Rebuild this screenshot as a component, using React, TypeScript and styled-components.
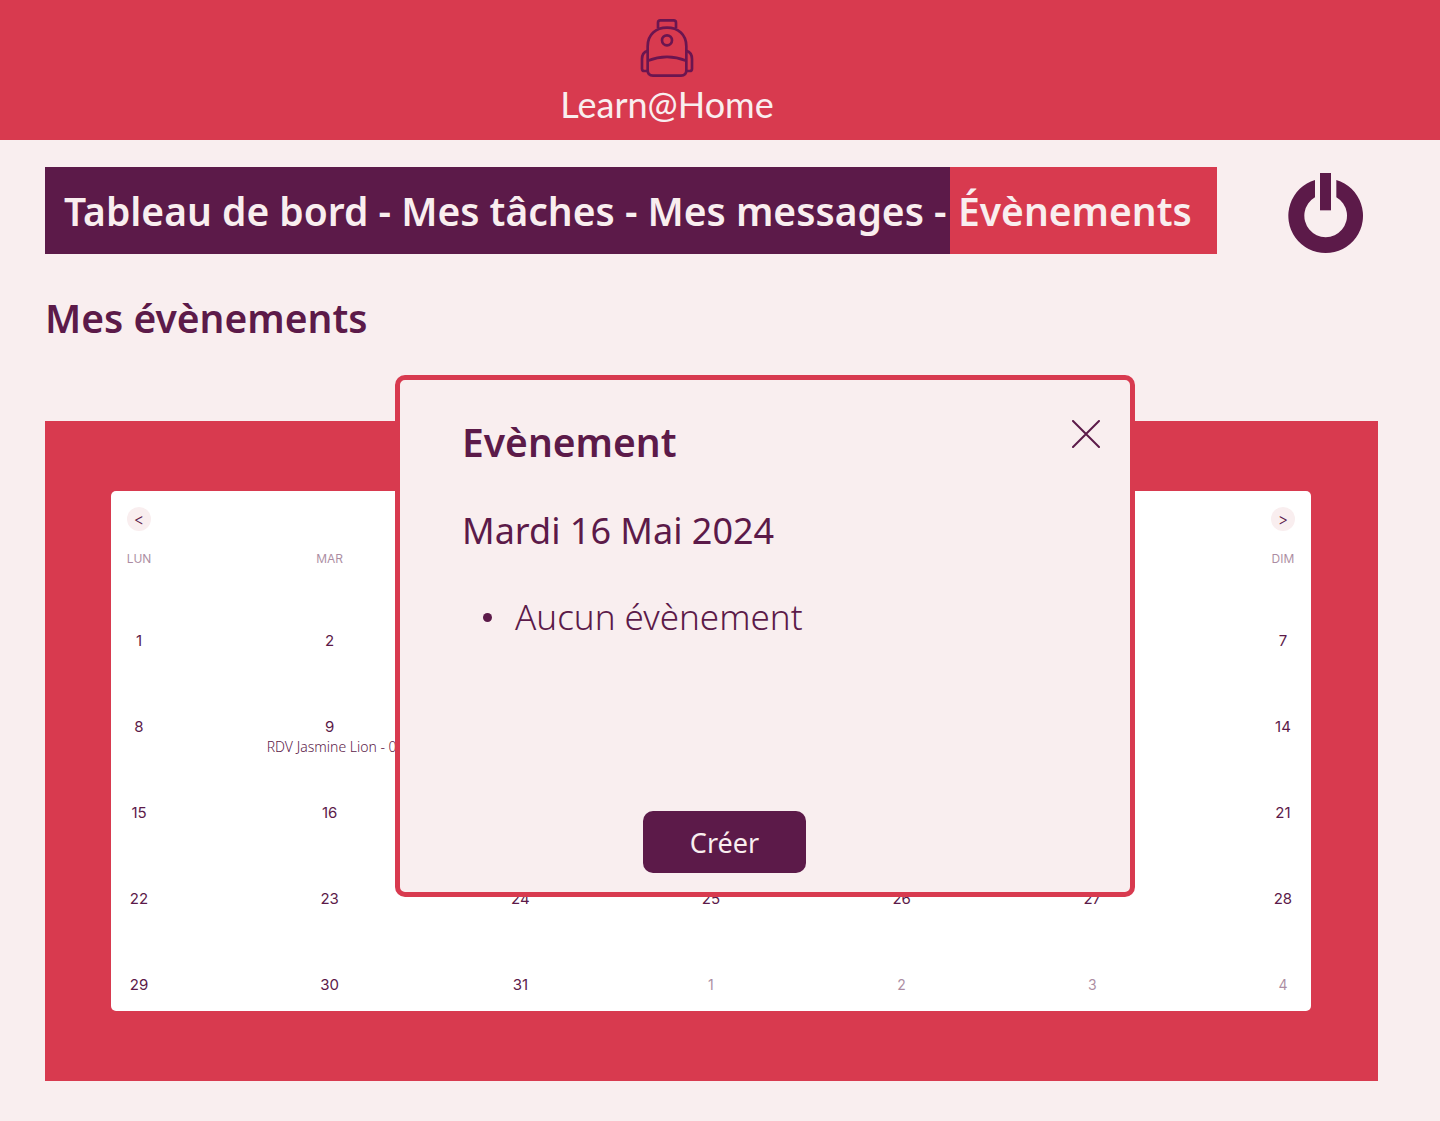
import React from "react";
import styled, { createGlobalStyle, css } from "styled-components";

const red = "#d83a4f";
const plum = "#5c1a49";
const blush = "#f9eeef";

const GlobalStyle = createGlobalStyle`
  *, *::before, *::after { box-sizing: border-box; }
  body {
    margin: 0;
    background: ${blush};
    color: ${plum};
    font-family: "Noto Sans", "Open Sans", sans-serif;
  }
  h1, h2, p, ul { margin: 0; padding: 0; }
  button { border: 0; padding: 0; font: inherit; color: inherit; background: none; cursor: pointer; }
`;

const Header = styled.header`
  display: flex;
  flex-direction: column;
  align-items: center;
  height: 140px;
  padding: 19px 106px 0 0;
  background: ${red};
`;

const Brand = styled.a`
  display: flex;
  flex-direction: column;
  align-items: center;
  gap: 2px;
  color: ${blush};
  font-family: Lato, sans-serif;
  font-size: 36px;
  line-height: 48px;
  text-decoration: none;
`;

const TopRow = styled.div`
  display: flex;
  align-items: flex-end;
  gap: 71px;
  padding: 27px 77px 0 45px;
`;

const Nav = styled.nav`
  display: flex;
  flex: 1;
  min-width: 0;
  height: 87px;
  font-size: 39px;
  font-weight: 600;
  line-height: 87px;
  white-space: nowrap;
  color: ${blush};
`;

const NavLinks = styled.div`
  flex: 1;
  padding-left: 19px;
  background: ${plum};
`;

const NavLink = styled.a<{ $active?: boolean }>`
  color: inherit;
  text-decoration: none;
  ${(p) =>
    p.$active &&
    css`
      flex: 0 0 267px;
      padding-left: 8px;
      background: ${red};
    `}
`;

const LogoutButton = styled.button`
  display: flex;
`;

const Main = styled.main`
  padding: 40px 62px 40px 45px;
`;

const PageTitle = styled.h1`
  margin-bottom: 79px;
  font-size: 39px;
  font-weight: 600;
  line-height: 48px;
`;

const Panel = styled.section`
  position: relative;
  padding: 70px 67px 70px 66px;
  background: ${red};
`;

const Card = styled.div`
  padding: 16px;
  border-radius: 5px;
  background: #fff;
  font-family: Inter, sans-serif;
`;

const MonthBar = styled.div`
  display: flex;
  justify-content: space-between;
  margin-bottom: 20px;
`;

const RoundButton = styled.button`
  width: 24px;
  height: 24px;
  border-radius: 50%;
  background: ${blush};
  font-size: 16px;
  font-weight: 300;
  line-height: 24px;
`;

const Calendar = styled.table`
  display: flex;
  flex-direction: column;
  gap: 64px;
`;

const Week = styled.tr`
  display: flex;
  justify-content: space-between;
`;

const Weeks = styled.tbody`
  display: grid;
  grid-auto-rows: 20px;
  row-gap: 66px;
`;

const WeekDay = styled.th<{ $covered: boolean }>`
  display: flex;
  justify-content: center;
  width: 24px;
  padding: 0;
  font-size: 12px;
  font-weight: 400;
  line-height: 16px;
  opacity: 0.5;
  visibility: ${(p) => (p.$covered ? "hidden" : "visible")};
`;

const Day = styled.td<{ $muted: boolean; $covered: boolean }>`
  display: flex;
  flex-direction: column;
  align-items: center;
  width: 24px;
  padding: 0;
  font-size: ${(p) => (p.$muted ? 14 : 15)}px;
  line-height: 20px;
  opacity: ${(p) => (p.$muted ? 0.5 : 1)};
  visibility: ${(p) => (p.$covered ? "hidden" : "visible")};
`;

const EventLabel = styled.span`
  width: 126px;
  font-family: "Noto Sans", sans-serif;
  font-size: 14px;
  font-weight: 300;
  white-space: nowrap;
`;

const Modal = styled.div`
  position: absolute;
  top: -46px;
  left: 350px;
  display: flex;
  flex-direction: column;
  width: 740px;
  height: 522px;
  padding: 40px 30px 19px 62px;
  border: 5px solid ${red};
  border-radius: 10px;
  background: ${blush};
`;

const ModalHeader = styled.div`
  display: flex;
  justify-content: space-between;
  align-items: flex-start;
`;

const ModalTitle = styled.h2`
  font-size: 39px;
  font-weight: 600;
  line-height: 44px;
`;

const CloseButton = styled.button`
  display: flex;
`;

const DateLine = styled.p`
  margin-top: 43px;
  font-size: 36px;
  font-weight: 400;
  line-height: 48px;
`;

const EventList = styled.ul`
  margin-top: 38px;
  padding-left: 21px;
  list-style: none;
  font-size: 35px;
  font-weight: 300;
  line-height: 48px;
`;

const EventItem = styled.li`
  display: flex;
  align-items: center;
  gap: 23px;

  &::before {
    content: "";
    width: 9px;
    height: 9px;
    border-radius: 50%;
    background: ${plum};
  }
`;

const CreateButton = styled.button`
  width: 163px;
  height: 62px;
  margin: auto 0 0 181px;
  border-radius: 10px;
  background: ${plum};
  color: ${blush};
  font-size: 27px;
`;

const Backpack = () => (
  <svg width="54" height="59" viewBox="300 58 162 177" fill="none" stroke="#6b1550" strokeWidth="8" aria-hidden="true">
    <path d="M354 85V69q0-7 7-7h40q7 0 7 7v16" />
    <path d="M323 183v-43c0-36 25-56 58-56s58 20 58 56v72q0 16-16 16h-84q-16 0-16-16z" />
    <circle cx="381" cy="122" r="15" />
    <path d="M323 183q58-23 116 0" />
    <path d="M323 153c-11 3-17 13-17 25v29q0 7 7 7h10M439 153c11 3 17 13 17 25v29q0 7-7 7h-10" />
  </svg>
);

const Power = () => (
  <svg width="75" height="81" viewBox="1164 39 225 243" fill={plum} aria-hidden="true">
    <path d="M1245 60A112 112 0 1 0 1309 60V112A64 64 0 1 1 1245 112Z" />
    <path d="M1260 39h33v112h-33z" />
  </svg>
);

const Cross = () => (
  <svg width="28" height="28" viewBox="0 0 28 28" stroke={plum} strokeWidth="2" strokeLinecap="round" aria-hidden="true">
    <path d="M1 1l26 26M27 1L1 27" />
  </svg>
);

const weekDays = ["LUN", "MAR", "MER", "JEU", "VEN", "SAM", "DIM"];
const weeks = [0, 1, 2, 3, 4].map((w) => weekDays.map((_, d) => w * 7 + d + 1));
const daysInMonth = 31;
const events: Record<number, string> = { 9: "RDV Jasmine Lion - 09h00" };

// Columns and weeks that lie entirely behind the open dialog.
const behindDialog = (column: number) => column >= 2 && column <= 5;
const weeksBehindDialog = 3;

export default function App() {
  return (
    <>
      <GlobalStyle />
      <Header>
        <Brand href="#">
          <Backpack />
          Learn@Home
        </Brand>
      </Header>
      <TopRow>
        <Nav>
          <NavLinks>
            <NavLink href="#">Tableau de bord</NavLink> - <NavLink href="#">Mes tâches</NavLink> -{" "}
            <NavLink href="#">Mes messages</NavLink> -
          </NavLinks>
          <NavLink href="#" $active aria-current="page">
            Évènements
          </NavLink>
        </Nav>
        <LogoutButton aria-label="Se déconnecter">
          <Power />
        </LogoutButton>
      </TopRow>
      <Main>
        <PageTitle>Mes évènements</PageTitle>
        <Panel>
          <Card>
            <MonthBar>
              <RoundButton aria-label="Mois précédent">&lt;</RoundButton>
              <RoundButton aria-label="Mois suivant">&gt;</RoundButton>
            </MonthBar>
            <Calendar>
              <thead>
                <Week>
                  {weekDays.map((d, column) => (
                    <WeekDay key={d} scope="col" $covered={behindDialog(column)}>
                      {d}
                    </WeekDay>
                  ))}
                </Week>
              </thead>
              <Weeks>
                {weeks.map((week, row) => (
                  <Week key={week[0]}>
                    {week.map((n, column) => (
                      <Day
                        key={n}
                        $muted={n > daysInMonth}
                        $covered={row < weeksBehindDialog && behindDialog(column)}
                      >
                        {n > daysInMonth ? n - daysInMonth : n}
                        {events[n] && <EventLabel>{events[n]}</EventLabel>}
                      </Day>
                    ))}
                  </Week>
                ))}
              </Weeks>
            </Calendar>
          </Card>
          <Modal role="dialog" aria-labelledby="modal-title">
            <ModalHeader>
              <ModalTitle id="modal-title">Evènement</ModalTitle>
              <CloseButton aria-label="Fermer">
                <Cross />
              </CloseButton>
            </ModalHeader>
            <DateLine>Mardi 16 Mai 2024</DateLine>
            <EventList>
              <EventItem>Aucun évènement</EventItem>
            </EventList>
            <CreateButton>Créer</CreateButton>
          </Modal>
        </Panel>
      </Main>
    </>
  );
}
